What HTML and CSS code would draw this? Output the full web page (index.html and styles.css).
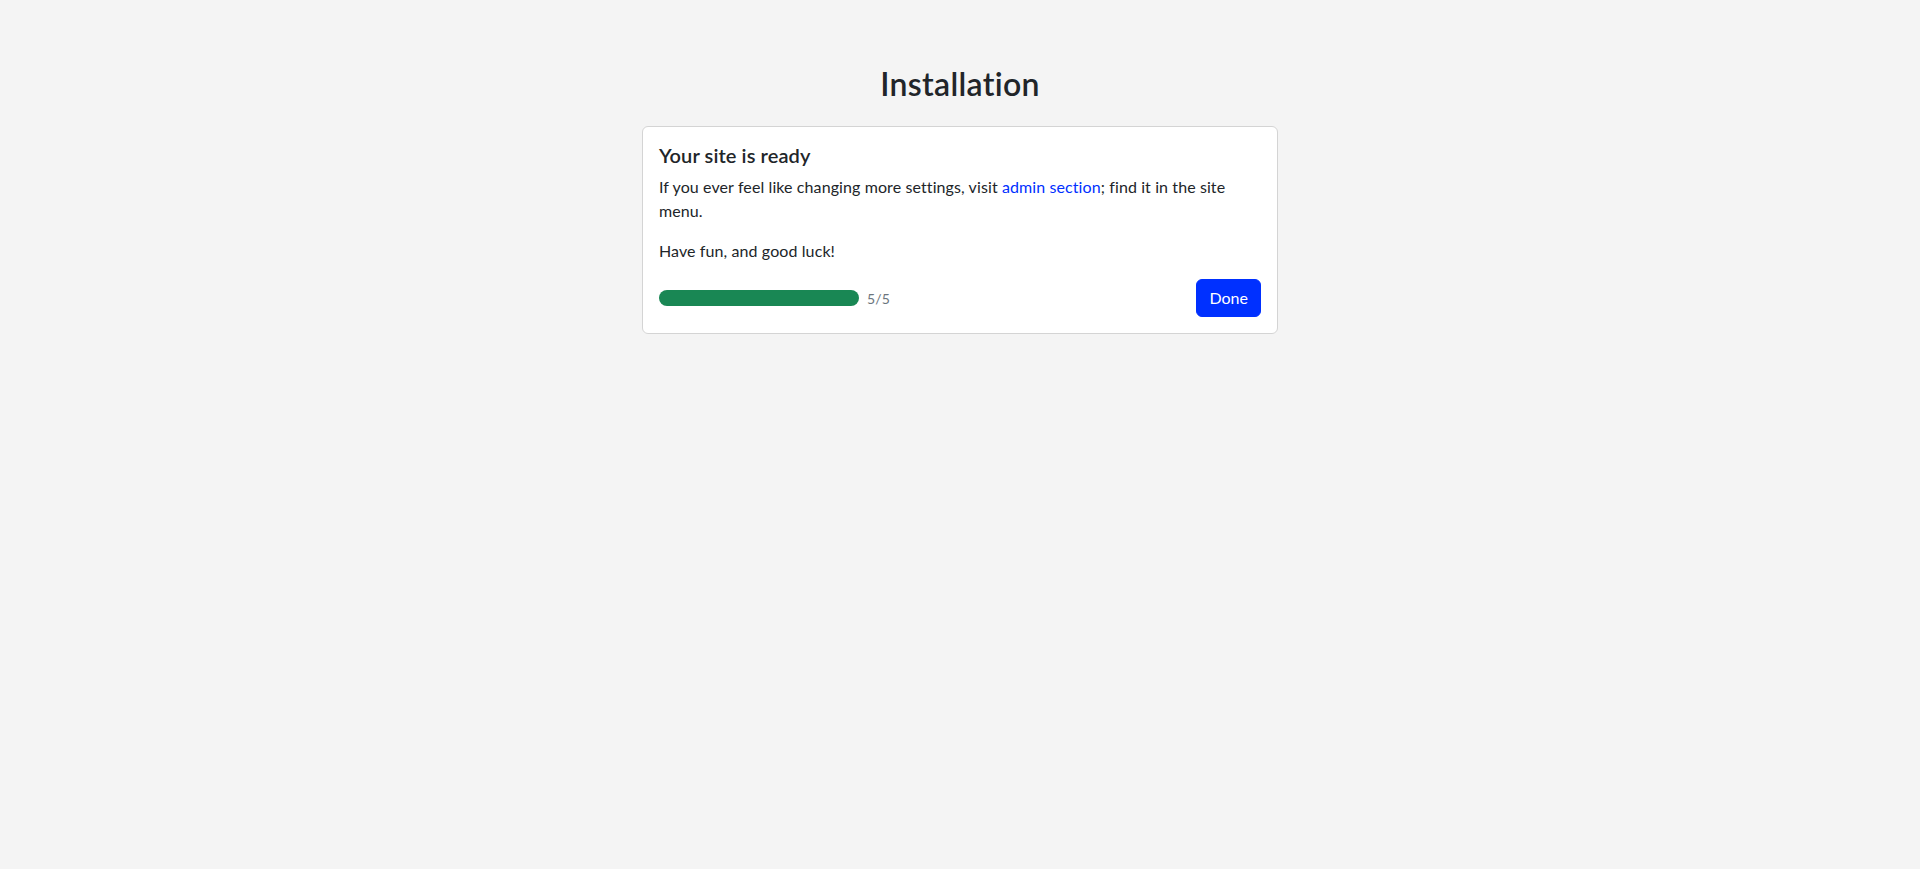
FILE: index.html
```html
<!DOCTYPE html>
<html lang="en">
<head>
    <meta charset="UTF-8">
    <meta name="viewport" content="width=device-width, initial-scale=1.0">
    <title>Installation</title>
    <link rel="stylesheet" href="styles.css">
</head>
<body>
    <main class="install">
        <h2 class="install-title">Installation</h2>
        <div class="card">
            <h5 class="card-title">Your site is ready</h5>
            <p>If you ever feel like changing more settings, visit <a href="#">admin section</a>; find it in the site menu.</p>
            <p>Have fun, and good luck!</p>
            <div class="card-footer">
                <div class="steps">
                    <div class="progress"><div class="progress-bar"></div></div>
                    <small class="muted">5/5</small>
                </div>
                <button class="btn">Done</button>
            </div>
        </div>
    </main>
</body>
</html>
```

FILE: styles.css
```css
body {
    margin: 0;
    font-family: 'Lato', 'Liberation Sans', sans-serif;
    font-size: 16px;
    line-height: 1.5;
    letter-spacing: 0.1px;
    color: #212529;
    background-color: #f4f4f4;
}
.install {
    width: 636px;
    margin: 0 auto;
    padding-top: 65px;
}
.install-title {
    margin: 0 0 23px;
    font-size: 32px;
    font-weight: 600;
    line-height: 1.2;
    letter-spacing: 0.3px;
    text-align: center;
}
.card {
    background-color: #fff;
    border: 1px solid #d4d4d4;
    border-radius: 6px;
    padding: 16px;
}
.card-title {
    margin: 0 0 8px;
    font-size: 20px;
    font-weight: 600;
    line-height: 1.2;
}
.card p {
    margin: 0 0 16px;
}
.card a {
    color: #0030ff;
    text-decoration: none;
}
.card-footer {
    display: flex;
    justify-content: space-between;
    align-items: center;
}
.steps {
    display: flex;
    align-items: center;
    gap: 8px;
}
.progress {
    width: 200px;
    height: 16px;
    border-radius: 8px;
    background-color: #e9ecef;
    overflow: hidden;
}
.progress-bar {
    width: 100%;
    height: 100%;
    background-color: #198754;
}
.muted {
    font-size: 14px;
    color: #6c757d;
}
.btn {
    font-family: inherit;
    font-size: 16px;
    line-height: 24px;
    padding: 6px 12px;
    color: #fff;
    background-color: #0030ff;
    border: 1px solid #0030ff;
    border-radius: 6px;
    cursor: pointer;
}
```
